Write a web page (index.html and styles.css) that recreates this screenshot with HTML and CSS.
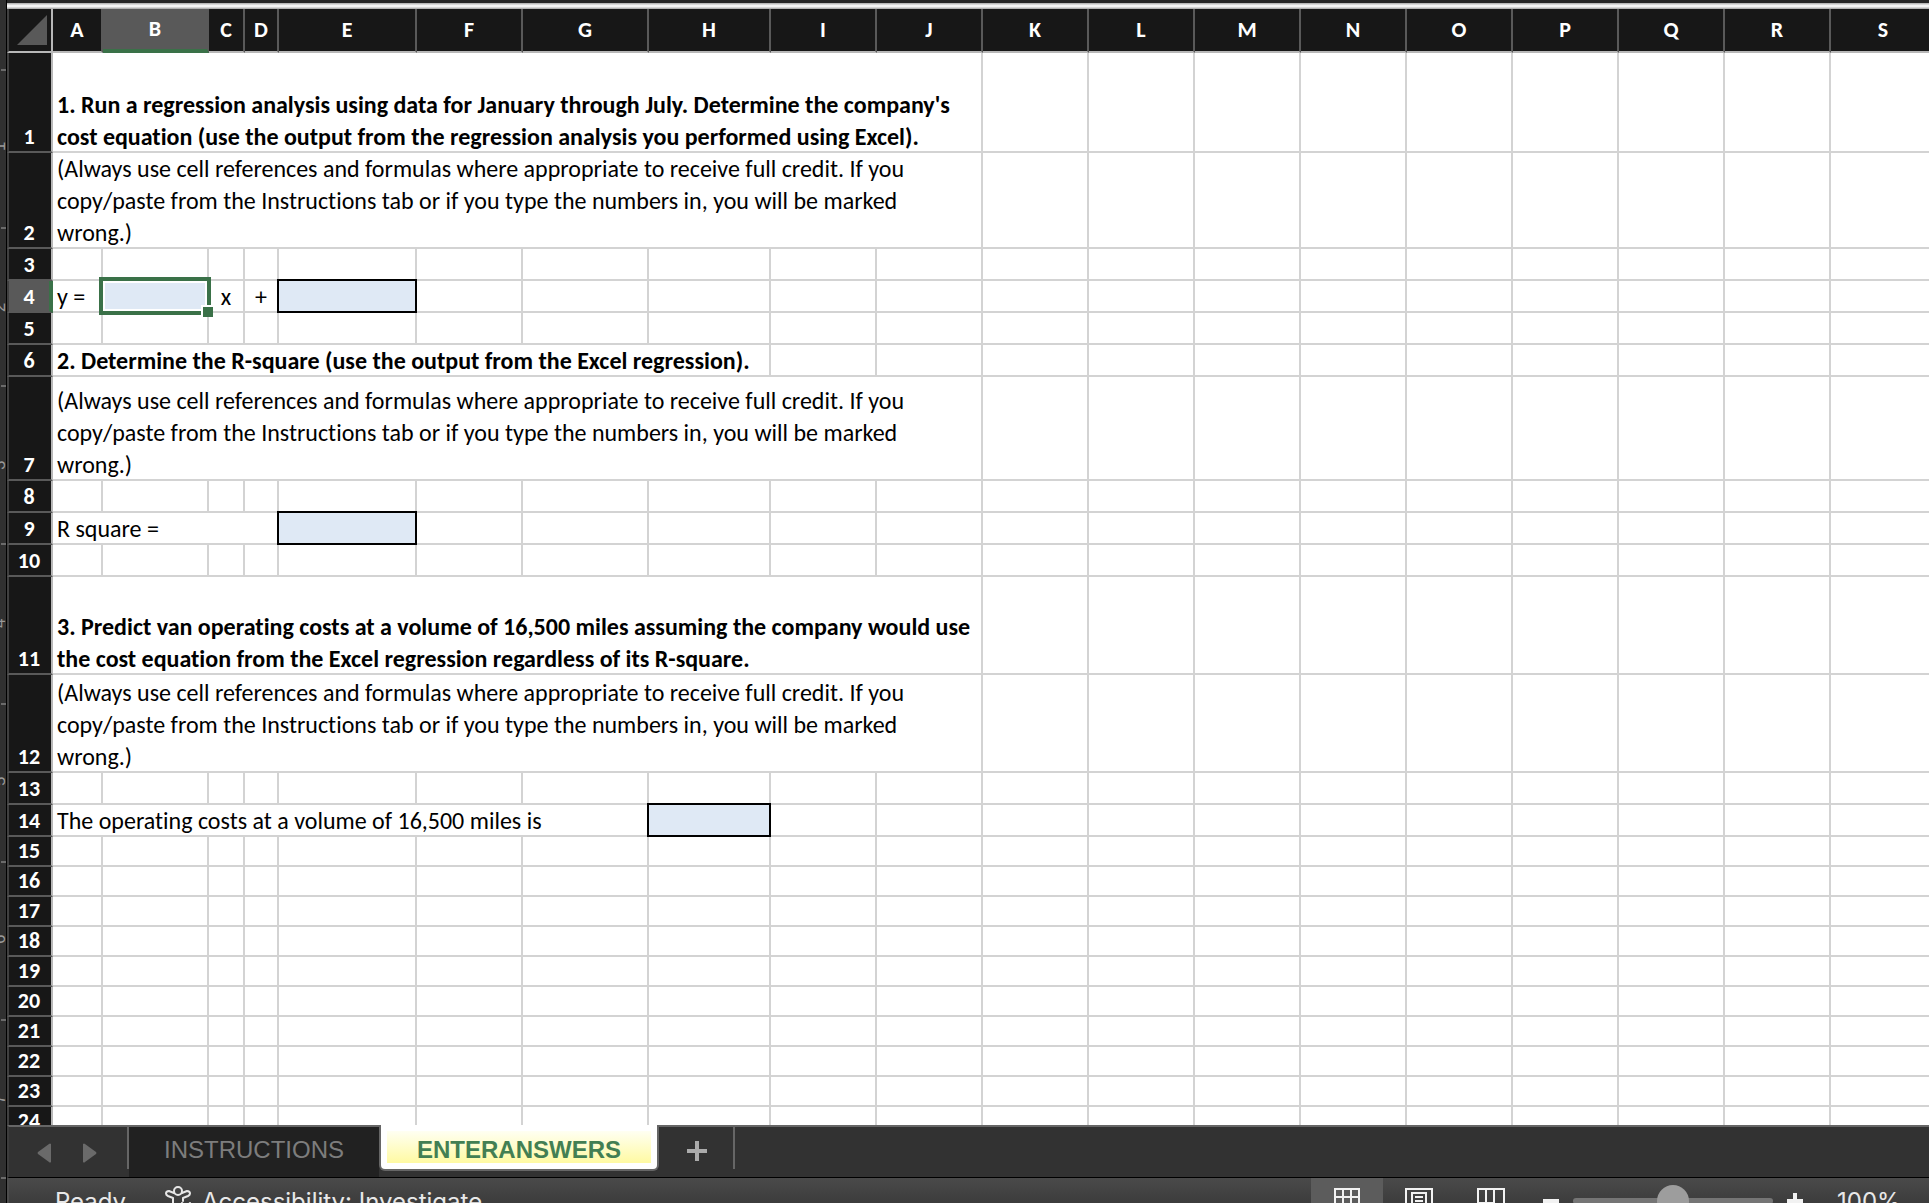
FILE: index.html
```html
<!DOCTYPE html>
<html lang="en">
<head>
<meta charset="utf-8">
<title>Enter Answers</title>
<link rel="stylesheet" href="styles.css">
</head>
<body>
<div class="window-edge"></div>
<div class="workspace">
  <svg class="ruler" width="7" height="1203" aria-hidden="true">
    <path class="ruler-tick" d="M1 70h5M1 228h5M1 386h5M1 544h5M1 704h5M1 862h5M1 1020h5M1 1178h5"/>
    <g class="ruler-number">
      <text transform="translate(5 151) rotate(-90)">1</text>
      <text transform="translate(5 312) rotate(-90)">2</text>
      <text transform="translate(5 470) rotate(-90)">3</text>
      <text transform="translate(5 628) rotate(-90)">4</text>
      <text transform="translate(5 786) rotate(-90)">5</text>
      <text transform="translate(5 944) rotate(-90)">6</text>
      <text transform="translate(5 1104) rotate(-90)">7</text>
    </g>
  </svg>
  <div class="book">
    <main class="sheet">
      <table class="grid">
        <colgroup>
          <col class="c-head"><col class="c-a"><col class="c-std"><col class="c-c"><col class="c-d"><col class="c-e"><col class="c-std"><col class="c-g"><col class="c-h"><col class="c-std" span="11">
        </colgroup>
        <thead>
          <tr>
            <td class="corner"><svg width="30" height="30" viewBox="0 0 30 30" aria-hidden="true"><path d="M30 0V30H0z" fill="#595959"/></svg></td>
            <th scope="col" class="before-active">A</th><th scope="col" class="active">B</th><th scope="col">C</th><th scope="col">D</th><th scope="col">E</th><th scope="col">F</th><th scope="col">G</th><th scope="col">H</th><th scope="col">I</th><th scope="col">J</th><th scope="col">K</th><th scope="col">L</th><th scope="col">M</th><th scope="col">N</th><th scope="col">O</th><th scope="col">P</th><th scope="col">Q</th><th scope="col">R</th><th scope="col">S</th>
          </tr>
        </thead>
        <tbody>
          <tr class="r-100"><th scope="row">1</th><td colspan="10"><p class="strong">1. Run a regression analysis using data for January through July. Determine the company's<br>cost equation (use the output from the regression analysis you performed using Excel).</p></td></tr>
          <tr class="r-96"><th scope="row">2</th><td colspan="10"><p>(Always use cell references and formulas where appropriate to receive full credit. If you<br>copy/paste from the Instructions tab or if you type the numbers in, you will be marked<br>wrong.)</p></td></tr>
          <tr class="r-32"><th scope="row">3</th></tr>
          <tr class="r-32"><th scope="row" class="active">4</th><td><p>y =</p></td><td class="entry selected"><input aria-label="Variable cost per mile, cell B4"><span class="fill-handle"></span></td><td><p class="center">x</p></td><td><p class="center">+</p></td><td class="entry"><input aria-label="Fixed cost, cell E4"></td></tr>
          <tr class="r-32"><th scope="row">5</th></tr>
          <tr class="r-32"><th scope="row">6</th><td colspan="8"><p class="strong">2. Determine the R-square (use the output from the Excel regression).</p></td></tr>
          <tr class="r-104"><th scope="row">7</th><td colspan="10"><p>(Always use cell references and formulas where appropriate to receive full credit. If you<br>copy/paste from the Instructions tab or if you type the numbers in, you will be marked<br>wrong.)</p></td></tr>
          <tr class="r-32"><th scope="row">8</th></tr>
          <tr class="r-32"><th scope="row">9</th><td colspan="4"><p>R square =</p></td><td class="entry"><input aria-label="R square, cell E9"></td></tr>
          <tr class="r-32"><th scope="row">10</th></tr>
          <tr class="r-98"><th scope="row">11</th><td colspan="10"><p class="strong">3. Predict van operating costs at a volume of 16,500 miles assuming the company would use<br>the cost equation from the Excel regression regardless of its R-square.</p></td></tr>
          <tr class="r-98"><th scope="row">12</th><td colspan="10"><p>(Always use cell references and formulas where appropriate to receive full credit. If you<br>copy/paste from the Instructions tab or if you type the numbers in, you will be marked<br>wrong.)</p></td></tr>
          <tr class="r-32"><th scope="row">13</th></tr>
          <tr class="r-32"><th scope="row">14</th><td colspan="7"><p>The operating costs at a volume of 16,500 miles is</p></td><td class="entry"><input aria-label="Operating costs, cell H14"></td></tr>
          <tr><th scope="row">15</th></tr>
          <tr><th scope="row">16</th></tr>
          <tr><th scope="row">17</th></tr>
          <tr><th scope="row">18</th></tr>
          <tr><th scope="row">19</th></tr>
          <tr><th scope="row">20</th></tr>
          <tr><th scope="row">21</th></tr>
          <tr><th scope="row">22</th></tr>
          <tr><th scope="row">23</th></tr>
          <tr><th scope="row">24</th></tr>
        </tbody>
      </table>
    </main>
    <nav class="tabs" aria-label="Sheets">
      <div class="scrollers">
        <button type="button" aria-label="Previous sheet"><svg width="14" height="20" viewBox="0 0 14 20"><path d="M14 1V19Q13 20 12 19L1 11Q0 10 1 9L12 1Q13 0 14 1z" fill="#6a6a6a"/></svg></button>
        <button type="button" aria-label="Next sheet"><svg width="14" height="20" viewBox="0 0 14 20"><path d="M0 1V19Q1 20 2 19L13 11Q14 10 13 9L2 1Q1 0 0 1z" fill="#6a6a6a"/></svg></button>
      </div>
      <button type="button" class="tab">INSTRUCTIONS</button>
      <button type="button" class="tab current"><span>ENTERANSWERS</span></button>
      <button type="button" class="add" aria-label="Add sheet"><svg width="20" height="20" viewBox="0 0 20 20"><path d="M8 0h4v8h8v4h-8v8H8v-8H0V8h8z" fill="#ababab"/></svg></button>
    </nav>
    <footer class="status">
      <div class="status-row">
        <span class="ready">Ready</span>
        <button type="button" class="access">
          <svg width="28" height="32" viewBox="0 0 28 32" fill="none" stroke="#e6e6e6" stroke-width="2" stroke-linejoin="round" stroke-linecap="round" aria-hidden="true"><circle cx="13" cy="6" r="4"/><path d="M9 8L4 6Q1 6 1 8.500Q1 10 3 11L8 13V18L5 26Q5 29 8 28L13 20M17 8L22 6Q25 6 25 8.500Q25 10 23 11L18 13V16M17 18l8 8M25 18l-8 8"/></svg>
          <span>Accessibility: Investigate</span>
        </button>
        <div class="views">
          <button type="button" class="view on" aria-label="Normal view"><svg width="26" height="24" viewBox="0 0 26 24" fill="none" stroke="#f2f2f2" stroke-width="2"><path d="M1 1H25V23H1zM9 1V23M17 1V23M1 9H25M1 17H25"/></svg></button>
          <button type="button" class="view" aria-label="Page layout view"><svg width="28" height="24" viewBox="0 0 28 24" fill="none" stroke="#f2f2f2" stroke-width="2"><path d="M1 1H27V23H1zM7 23V5H21V23M10 9h8M10 13h8M10 17h8"/></svg></button>
          <button type="button" class="view" aria-label="Page break view"><svg width="28" height="24" viewBox="0 0 28 24" fill="none" stroke="#f2f2f2" stroke-width="2"><path d="M1 1H27V23H1zM9 1V15M17 1V15M1 15H17"/></svg></button>
        </div>
        <div class="zoom">
          <button type="button" aria-label="Zoom out"><svg width="16" height="16" viewBox="0 0 16 16"><path d="M0 6h16v4H0z" fill="#f2f2f2"/></svg></button>
          <input type="range" min="0" max="200" value="100" aria-label="Zoom">
          <button type="button" aria-label="Zoom in"><svg width="16" height="16" viewBox="0 0 16 16"><path d="M6 0h4v6h6v4h-6v6H6v-6H0V6h6z" fill="#f2f2f2"/></svg></button>
          <span class="percent">100%</span>
        </div>
      </div>
    </footer>
  </div>
</div>
<script src="grid.js"></script>
</body>
</html>
```
FILE: styles.css
```css
* { box-sizing: border-box; }

body {
  margin: 0;
  height: 100vh;
  display: flex;
  flex-direction: column;
  overflow: hidden;
  background: #2e2e2e;
  color: #000;
  font-family: Carlito, Lato, sans-serif;
  font-size: 24px;
  font-variant-ligatures: none;
}

button {
  margin: 0;
  padding: 0;
  border: 0;
  background: none;
  color: inherit;
  font: inherit;
  display: flex;
  align-items: center;
}

.window-edge { flex: none; height: 3px; background: #262626; }

.workspace { flex: 1; min-height: 0; display: flex; }

.ruler {
  flex: none;
  margin-top: -3px;
  border-right: 1px solid #000;
  background: #303030;
}
.ruler-tick { stroke: #6b6b6b; stroke-width: 2; }
.ruler-number { fill: #999; font-family: "Liberation Sans", sans-serif; font-size: 17px; }

.book { flex: 1; min-width: 0; display: flex; flex-direction: column; }

/* Worksheet */
.sheet {
  flex: 1;
  min-height: 0;
  overflow: hidden;
  background: #fff;
}
.sheet::before {
  content: "";
  display: block;
  height: 6px;
  background: linear-gradient(#a8a8a8, #f4f4f4 40%, #f4f4f4 60%, #a0a0a0);
}

.grid {
  width: 0;
  table-layout: fixed;
  border-collapse: separate;
  border-spacing: 0;
}
.c-head { width: 46px; }
.c-a { width: 50px; }
.c-std { width: 106px; }
.c-c { width: 36px; }
.c-d { width: 34px; }
.c-e { width: 138px; }
.c-g { width: 126px; }
.c-h { width: 122px; }

.grid td, .grid th { padding: 0; vertical-align: bottom; }
.grid tbody tr { height: 30px; }
.grid tbody td {
  position: relative;
  border-right: 2px solid #d3d3d3;
  border-bottom: 2px solid #d3d3d3;
}
.grid th {
  background: #171717;
  color: #fff;
  font-size: 22px;
  line-height: 28px;
  text-align: center;
}
.grid thead th, .grid .corner {
  height: 44px;
  vertical-align: middle;
  background: #171717;
  border-right: 2px solid #595959;
  border-bottom: 2px solid #b8b8b8;
}
.grid .corner { border-left: 2px solid #404040; border-right-color: #b8b8b8; }
.corner svg { display: block; margin-left: 8px; }
.grid tbody th {
  padding-right: 2px;
  border-left: 2px solid #404040;
  border-right: 2px solid #b8b8b8;
  border-bottom: 2px solid #595959;
}
.grid thead .active {
  background: #595959;
  border-bottom: 4px solid #3a7148;
}
.grid tbody th.active {
  padding-right: 0;
  background: #595959;
  border-right: 4px solid #3a7148;
}

.grid tbody .r-32 { height: 32px; }
.grid tbody .r-96 { height: 96px; }
.grid tbody .r-98 { height: 98px; }
.grid tbody .r-100 { height: 100px; }
.grid tbody .r-104 { height: 104px; }

/* Text lines are as tall as a row with its grid line */
.grid p {
  margin: 0 0 -2px;
  padding-left: 4px;
  line-height: 32px;
  white-space: nowrap;
}
.grid .strong { font-weight: 700; }
.grid .center { padding: 0; text-align: center; }

.entry input {
  position: absolute;
  inset: -2px;
  width: calc(100% + 4px);
  height: calc(100% + 4px);
  padding: 0 4px;
  border: 2px solid #000;
  border-radius: 0;
  outline: 0;
  background: #dfe9f5;
  font: inherit;
}
.selected input {
  inset: -4px;
  width: calc(100% + 8px);
  height: calc(100% + 8px);
  border: 4px solid #3a7148;
  box-shadow: inset 0 0 0 2px #fff;
  z-index: 1;
}
.fill-handle {
  position: absolute;
  right: -6px;
  bottom: -6px;
  z-index: 2;
  width: 12px;
  height: 12px;
  border: solid #fff;
  border-width: 2px 0 0 2px;
  background: #3a7148;
}

/* Sheet tabs */
.tabs {
  flex: none;
  height: 52px;
  display: flex;
  align-items: flex-start;
  border-top: 2px solid #666;
  border-left: 2px solid #3c3c3c;
  background: #323232;
  font-family: "Liberation Sans", sans-serif;
}
.scrollers {
  width: 120px;
  height: 42px;
  padding: 10px 0 0 28px;
  display: flex;
  align-items: center;
  gap: 32px;
  border-right: 2px solid #666;
}
.tab {
  width: 250px;
  height: 50px;
  padding-bottom: 4px;
  justify-content: center;
  background: #212121;
  color: #7d7d7d;
}
.tab.current {
  width: 280px;
  height: 46px;
  margin-top: -2px;
  padding: 6px;
  align-items: stretch;
  border: 2px solid #666;
  border-top: 0;
  border-radius: 0 0 6px 6px;
  background: #fff;
  color: #437f53;
  font-weight: 700;
}
.tab.current span {
  flex: 1;
  line-height: 38px;
  background: linear-gradient(#fffff2, #fffaa2);
}
.add {
  width: 76px;
  height: 42px;
  padding: 6px 0 0 28px;
  border-right: 2px solid #666;
}

/* Status bar */
.status {
  flex: none;
  height: 26px;
  overflow: hidden;
  border-top: 1px solid #000;
  border-left: 2px solid #4c4c4c;
  background: linear-gradient(#4a4a4a, #3c3c3c);
  color: #e8e8e8;
  font-family: Inter, sans-serif;
}
.status-row { height: 46px; display: flex; align-items: center; }
.ready { margin-left: 46px; width: 110px; }
.access { gap: 9px; }
.views { margin-left: auto; display: flex; }
.view { width: 72px; height: 46px; justify-content: center; }
.view svg { margin-top: -3px; }
.view.on { background: #5c5c5c; }
.zoom { margin-left: 16px; display: flex; align-items: center; gap: 14px; }
.percent { margin-left: 20px; width: 92px; }
.zoom input {
  appearance: none;
  width: 200px;
  height: 32px;
  margin: 0;
  background: none;
}
.zoom input::-webkit-slider-runnable-track {
  height: 6px;
  border-radius: 3px;
  background: #757575;
}
.zoom input::-webkit-slider-thumb {
  appearance: none;
  width: 32px;
  height: 32px;
  margin-top: -13px;
  border-radius: 50%;
  background: #9d9d9d;
}
```
FILE: grid.js
```js
// Complete every row with empty cells up to the last column.
const columns = document.querySelectorAll('.grid thead th').length;
for (const row of document.querySelectorAll('.grid tbody tr')) {
  let used = 0;
  for (const cell of row.querySelectorAll('td')) used += cell.colSpan;
  for (; used < columns; used++) row.appendChild(document.createElement('td'));
}
```
